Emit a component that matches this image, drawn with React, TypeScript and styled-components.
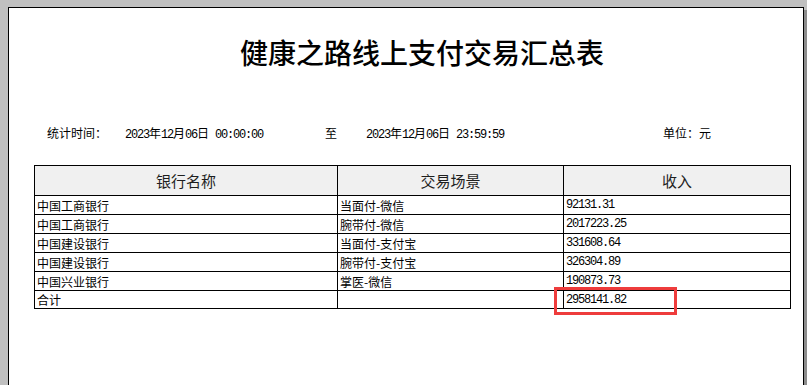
import React from "react";
import styled, { createGlobalStyle } from "styled-components";

const GlobalStyle = createGlobalStyle`
  html, body {
    margin: 0;
    padding: 0;
    overflow: hidden;
    background: #c0c0c0;
  }
  body {
    font-family: "Noto Sans CJK SC", "Liberation Sans", sans-serif;
    color: #000;
  }
  * { box-sizing: border-box; }
`;

const Viewport = styled.div`
  padding: 7px 0 0 8px;
  height: 385px;
`;

const Page = styled.div`
  position: relative;
  width: 796px;
  height: 420px;
  background: #fff;
  border: 1px solid #000;
  box-shadow: 3px 3px 0 #8c8c8c;
`;

const Title = styled.h1`
  margin: 27px 0 0;
  padding-left: 32px;
  height: 40px;
  line-height: 40px;
  text-align: center;
  font-family: "Liberation Serif", "Noto Sans CJK SC", serif;
  font-size: 28px;
  font-weight: 500;
  letter-spacing: 0;
`;

const InfoRow = styled.div`
  display: grid;
  grid-template-columns: 78px 200px 41px 297px auto;
  margin: 50px 0 0 38px;
  height: 16px;
  line-height: 16px;
  font-size: 12px;
  white-space: nowrap;
`;

const Num = styled.span`
  font-family: "Liberation Mono", monospace;
  font-size: 12px;
  letter-spacing: -1.2px;
`;

const Table = styled.div`
  display: grid;
  grid-template-columns: 303px 226px 227px;
  width: 757px;
  margin: 24px 0 0 25px;
  border-left: 1px solid #000;
  border-top: 1px solid #000;
`;

const HeadCell = styled.div`
  height: 30px;
  display: flex;
  align-items: center;
  justify-content: center;
  background: #f0f0f0;
  border-right: 1px solid #000;
  border-bottom: 1px solid #000;
  font-size: 15px;
  color: #1e1e1e;
`;

const Cell = styled.div<{ $last?: boolean }>`
  height: ${(p) => (p.$last ? 18 : 19)}px;
  display: flex;
  align-items: center;
  padding-left: 2px;
  border-right: 1px solid #000;
  border-bottom: 1px solid #000;
  font-size: 12px;
  white-space: nowrap;
  overflow: hidden;
`;

const Highlight = styled.div`
  position: absolute;
  left: 545px;
  top: 279px;
  width: 123px;
  height: 28px;
  border: 3px solid #ee3c3c;
  pointer-events: none;
`;

const DateText: React.FC<{ time: string }> = ({ time }) => (
  <span>
    <Num>2023</Num>年<Num>12</Num>月<Num>06</Num>日<Num> {time}</Num>
  </span>
);

const rows: [string, string, string][] = [
  ["中国工商银行", "当面付-微信", "92131.31"],
  ["中国工商银行", "腕带付-微信", "2017223.25"],
  ["中国建设银行", "当面付-支付宝", "331608.64"],
  ["中国建设银行", "腕带付-支付宝", "326304.89"],
  ["中国兴业银行", "掌医-微信", "190873.73"],
  ["合计", "", "2958141.82"],
];

export default function App() {
  return (
    <>
      <GlobalStyle />
      <Viewport>
        <Page>
          <Title>健康之路线上支付交易汇总表</Title>
          <InfoRow>
            <span>统计时间：</span>
            <DateText time="00:00:00" />
            <span>至</span>
            <DateText time="23:59:59" />
            <span>单位：元</span>
          </InfoRow>
          <Table>
            <HeadCell>银行名称</HeadCell>
            <HeadCell>交易场景</HeadCell>
            <HeadCell>收入</HeadCell>
            {rows.map((r, i) => {
              const last = i === rows.length - 1;
              return (
                <React.Fragment key={i}>
                  <Cell $last={last}>{r[0]}</Cell>
                  <Cell $last={last}>{r[1]}</Cell>
                  <Cell $last={last}>
                    <Num>{r[2]}</Num>
                  </Cell>
                </React.Fragment>
              );
            })}
          </Table>
          <Highlight />
        </Page>
      </Viewport>
    </>
  );
}
